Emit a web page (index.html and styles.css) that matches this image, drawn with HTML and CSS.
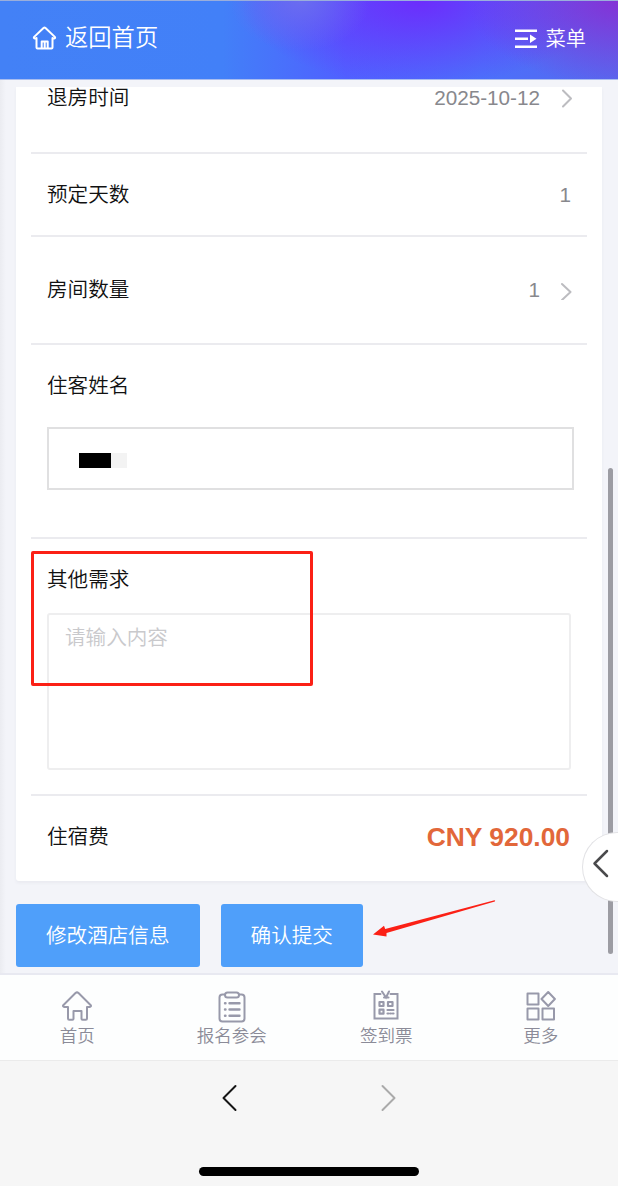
FILE: index.html
```html
<!DOCTYPE html>
<html lang="zh-CN">
<head>
  <meta charset="UTF-8">
  <meta name="viewport" content="width=device-width, initial-scale=1.0">
  <title>酒店预订</title>
  <link rel="stylesheet" href="styles.css">
</head>
<body>
  <header class="header">
    <a class="home">
      <svg width="25" height="25" viewBox="0 0 25 25"><path d="M4.5 12v9.500q0 1 1 1h14q1 0 1-1V12M4.500 12.500H2.800q-1.500-.3-.6-1.600L11.500 2q1-.8 2 0l9.300 8.900q.9 1.300-.6 1.600h-1.700M9.700 22v-6.500h6V22M12.700 16v6"/></svg>
      <span>返回首页</span>
    </a>
    <a class="menu">
      <svg width="23" height="20" viewBox="0 0 23 20"><path d="M0 .5h22v2.600H0zM0 8.500h13v2.600H0zM0 16.500h22v2.600H0zM15 5.500l6.500 4.300-6.500 4.300z"/></svg>
      <span>菜单</span>
    </a>
  </header>

  <main class="main">
    <section class="card">
      <div class="row checkout">
        <span>退房时间</span>
        <span class="value">2025-10-12</span>
        <svg class="arrow" width="12" height="20" viewBox="0 0 12 20"><path d="M2 2.500l8 8-8 8"/></svg>
      </div>
      <div class="row days">
        <span>预定天数</span>
        <span class="value">1</span>
      </div>
      <div class="row rooms">
        <span>房间数量</span>
        <span class="value">1</span>
        <svg class="arrow" width="12" height="20" viewBox="0 0 12 20"><path d="M1 4l8.500 8L1 20"/></svg>
      </div>
      <div class="field guest">
        <span>住客姓名</span>
        <div class="input"><i class="mask"></i><i class="mask light"></i></div>
      </div>
      <div class="field other">
        <span>其他需求</span>
        <div class="textarea">请输入内容</div>
        <div class="mark"></div>
      </div>
      <div class="row total">
        <span>住宿费</span>
        <span class="price">CNY 920.00</span>
      </div>
    </section>

    <div class="btns">
      <a class="btn">修改酒店信息</a>
      <a class="btn">确认提交</a>
    </div>

    <svg class="pointer" width="124" height="38" viewBox="0 0 124 38"><path d="M1 34.500L12 25.800 13.200 29 122.500.3Q123.800.4 122.800 1.600L14.500 33 14.500 36.500z"/></svg>
    <div class="scrollbar"></div>
    <div class="drawer">
      <svg width="18" height="30" viewBox="0 0 18 30"><path d="M15 2L2.500 14.500 15 27"/></svg>
    </div>
  </main>

  <nav class="tabs">
    <a>
      <svg width="32" height="34" viewBox="0 0 32 34"><path d="M7 18H3.200q-2-.5-.7-2L14.500 4q1.500-1.200 3 0l12 12q1.300 1.500-.7 2H26v11.500q0 1.200-1.200 1.200h-3.300q-1 0-1-1V22h-8v7.700q0 1-1 1H8.200q-1.200 0-1.200-1.200z"/></svg>
      <span>首页</span>
    </a>
    <a>
      <svg width="32" height="34" viewBox="0 0 32 34"><path d="M9 5.500H6.500q-3 0-3 3v21q0 3 3 3h19q3 0 3-3v-21q0-3-3-3H23"/><rect x="9" y="3.500" width="14" height="5" rx="2.500"/><path d="M9 14.300h.5M13.500 14.300h10M9 20.500h.5M13.500 20.500h10M9 26.800h.5M13.500 26.800h10" stroke-width="2.400"/></svg>
      <span>报名参会</span>
    </a>
    <a>
      <svg width="32" height="34" viewBox="0 0 32 34"><path d="M10.500 5H4.500v24.500h23V5H20.500M12 2.500l4 6L19 2.500M14 8.500h4.500" stroke-linejoin="miter"/><path d="M9.500 13h4v4h-4zM18 13h4.500v4H18zM9.500 20.700h4v4h-4zM17.500 21h6M17.500 24.500h1M20.300 24.500h.7M22.800 24.500h.7" stroke-width="2.200"/></svg>
      <span>签到票</span>
    </a>
    <a>
      <svg width="32" height="34" viewBox="0 0 32 34"><path d="M2.500 4.500h11v11h-11zM2.500 19.500h11v11h-11zM17.500 19.500h11.500v11H17.500zM23.200 3l6.700 7-6.700 7-6.700-7z"/></svg>
      <span>更多</span>
    </a>
  </nav>

  <footer class="browser">
    <div class="history">
      <svg width="16" height="28" viewBox="0 0 16 28"><path d="M13.500 2L1.500 14l12 12"/></svg>
      <svg class="next" width="16" height="28" viewBox="0 0 16 28"><path d="M1.500 2l12 12-12 12"/></svg>
    </div>
    <div class="home-bar"></div>
  </footer>
</body>
</html>
```
FILE: styles.css
```css
*{margin: 0; padding: 0; box-sizing: border-box;}
body{
  height: 1186px;
  font: 350 20.600px/30px "Liberation Sans", "Noto Sans CJK SC", sans-serif;
  color: #111;
  background: #f3f4f9;
  overflow: hidden;
}
svg{
  display: block;
  flex: none;
  fill: none;
  stroke: currentColor;
  stroke-width: 2;
  stroke-linejoin: round;
  stroke-linecap: round;
}

/* 顶部 */
.header{
  height: 80px;
  padding: 0 32px;
  display: flex;
  justify-content: space-between;
  align-items: center;
  color: #fff;
  border-top: 1px solid #9aaedb;
  border-bottom: 1px solid #a9bdf0;
  background:
    radial-gradient(ellipse 150px 85px at 100% 0, #8432d6, rgba(132, 50, 214, 0)),
    radial-gradient(ellipse 70px 50px at 300px 0, #6a6cf0, rgba(106, 108, 240, 0)),
    radial-gradient(ellipse 180px 85px at 420px 0, #6c2dfc, rgba(108, 45, 252, 0)),
    linear-gradient(90deg, #4381f6 0, #4280f8 36%, #5060ff 56%, #4b70fb 78%, #5868ee 100%);
}
.home, .menu{display: flex; align-items: center;}
.home{gap: 8px; font-size: 23.300px; padding-bottom: 4px;}
.menu{gap: 7px; font-size: 20.300px; padding-bottom: 2px;}
.menu svg{fill: #fff; stroke: none;}

/* 表单 */
.main{
  height: 893px;
  padding: 7px 16px 0;
  position: relative;
  background: linear-gradient(90deg, #ebecf1, #f3f4f9 6px);
}
.card{
  height: 794px;
  padding: 0 15px;
  background: #fff;
  border-radius: 0 0 3px 3px;
  box-shadow: 0 2px 3px #e9eaf0;
}
.row, .field{
  padding: 0 16px;
  border-bottom: 2px solid #ebebef;
}
.row{display: flex; align-items: center;}
.value{margin-left: auto; color: #88888d; font-size: 20.700px;}
.arrow{margin-left: 21px; margin-right: -2px; color: #bcbcc0;}
.checkout{height: 67px; padding-bottom: 43px;}
.days{height: 83px;}
.rooms{height: 108px;}
.guest{height: 194px; padding-top: 26px; padding-right: 13px;}
.input{
  height: 63px;
  margin-top: 26px;
  padding-left: 30px;
  display: flex;
  align-items: center;
  border: 2px solid #e0e0e1;
}
.mask{width: 32px; height: 15px; margin-top: 4px; background: #000;}
.light{width: 16px; background: #f3f3f3;}
.other{height: 257px; padding-top: 26px; position: relative;}
.textarea{
  height: 157px;
  margin-top: 18px;
  padding: 8px 16px;
  border: 2px solid #eeeeef;
  border-radius: 3px;
  color: #c9c9cc;
}
.mark{
  width: 282px; height: 135px;
  position: absolute; left: 0; top: 12px;
  border: 3px solid #fb2016;
  border-radius: 2px;
}
.total{height: 85px; padding-bottom: 3px; border: none;}
.price{margin-left: auto; margin-right: 1px; font-size: 26.400px; font-weight: bold; color: #e2673a;}

.btns{display: flex; gap: 21px; margin-top: 23px;}
.btn{
  height: 63px;
  padding: 0 30px;
  line-height: 63px;
  border-radius: 3px;
  color: #fff;
  background: #4f9ffa;
}

/* 浮动元素 */
.pointer{position: absolute; left: 372px; top: 820px; fill: #fb2016; stroke: none;}
.scrollbar{
  width: 5px; height: 486px;
  position: absolute; right: 5px; top: 388px;
  border-radius: 3px;
  background: #9c9ca3;
}
.drawer{
  width: 36px; height: 70px;
  padding: 16px 0 0 9px;
  position: absolute; right: 0; top: 752px;
  border: 1px solid #e2e2e5;
  border-right: none;
  border-radius: 36px 0 0 36px;
  background: #fff;
  color: #4a4a4c;
}
.drawer svg{stroke-width: 2.500;}

/* 底部导航 */
.tabs{
  height: 88px;
  padding-top: 14px;
  display: flex;
  border-top: 2px solid #e8e9f1;
  border-bottom: 1px solid #ebebeb;
  background: #fdfefe;
  color: #8b8b98;
  font-size: 17.500px;
  line-height: 27px;
}
.tabs a{flex: 1; display: flex; flex-direction: column; align-items: center;}
.tabs svg{stroke: #9899aa;}

.browser{height: 125px; padding-top: 23px; background: #f6f6f6;}
.history{display: flex; justify-content: center; gap: 143px; color: #151515;}
.next{color: #aaa;}
.home-bar{
  width: 220px; height: 9px;
  margin: 55px auto 0;
  border-radius: 5px;
  background: #000;
}
```
